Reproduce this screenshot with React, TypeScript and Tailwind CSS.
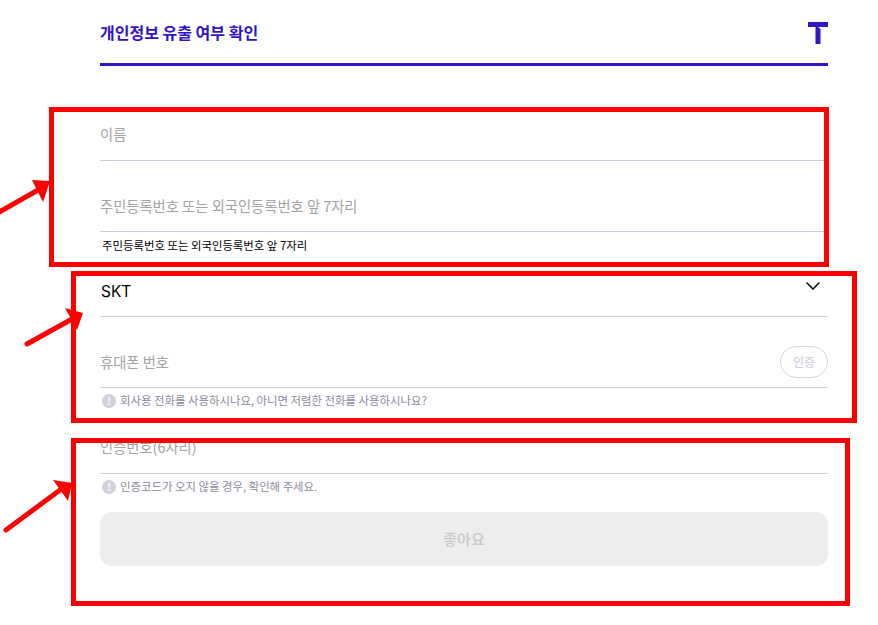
import { ChevronDown } from "lucide-react"

const font = { fontFamily: '"Noto Sans CJK KR", "Noto Sans", sans-serif' }

function Logo() {
  return (
    <svg viewBox="0 0 20 22" className="h-[22px] w-5 text-[#3413c4]">
      <rect fill="currentColor" x="0" y="0" width="20" height="5" />
      <polygon fill="currentColor" points="7.5,5 10,5 12.5,7 12.5,22 7.5,22" />
    </svg>
  )
}

function Notice({ children }: { children: React.ReactNode }) {
  return (
    <div className="flex h-[26px] items-center gap-1 pl-0.5 text-[11.4px] text-[#8b8b9b]">
      <span className="flex h-[14px] w-[14px] items-center justify-center rounded-full bg-[#cfd1dc] text-[10px] font-bold leading-none text-white">!</span>
      <span>{children}</span>
    </div>
  )
}

function Field({ label, className, children }: { label: string; className: string; children?: React.ReactNode }) {
  return (
    <div className={`flex items-center justify-between border-b border-[#cdcddc] text-[14.3px] text-[#a3a3a3] ${className}`}>
      <span>{label}</span>
      {children}
    </div>
  )
}

function Arrow({ x1, y1, x2, y2, head }: { x1: number; y1: number; x2: number; y2: number; head: string }) {
  return (
    <>
      <line x1={x1} y1={y1} x2={x2} y2={y2} stroke="#ff0000" strokeWidth="5" strokeLinecap="round" />
      <polygon points={head} fill="#ff0000" />
    </>
  )
}

export default function App() {
  return (
    <div className="relative h-[625px] w-[878px] overflow-hidden bg-white" style={font}>
      <div className="ml-[100px] flex w-[728px] flex-col">
        <header className="flex h-[66px] items-start justify-between border-b-[3px] border-[#3413c4] pt-[21px]">
          <h1 className="text-[16px] font-bold leading-[22px] text-[#3413c4]">개인정보 유출 여부 확인</h1>
          <div className="pt-px">
            <Logo />
          </div>
        </header>

        <Field label="이름" className="mt-[47px] h-[48px] pb-1.5" />
        <Field label="주민등록번호 또는 외국인등록번호 앞 7자리" className="mt-[22px] h-[49px] pb-[2px]" />
        <div className="h-[26px] pl-0.5 text-[11.4px] leading-[26px] text-black">주민등록번호 또는 외국인등록번호 앞 7자리</div>

        <div className="mt-[10px] flex h-[49px] items-start justify-between border-b border-[#cdcddc] pl-px pr-[3px] pt-[6px] text-black">
          <span className="pt-[7px] text-[15.5px] leading-[22px]" style={{ fontFamily: "Inter, sans-serif" }}>SKT</span>
          <ChevronDown className="h-6 w-6" strokeWidth={1.5} />
        </div>
        <Field label="휴대폰 번호" className="mt-[22px] h-[49px] pb-[2px]">
          <button className="h-8 w-12 rounded-full border border-[#d5d6e0] text-xs font-medium text-[#cfd1dc]">인증</button>
        </Field>
        <Notice>회사용 전화를 사용하시나요, 아니면 저렴한 전화를 사용하시나요?</Notice>

        <Field label="인증번호(6자리)" className="mt-[22px] h-[38px] pb-[15px]" />
        <Notice>인증코드가 오지 않을 경우, 확인해 주세요.</Notice>
        <button className="mt-[12px] h-[54px] w-full rounded-xl bg-[#ededed] text-[15px] font-medium text-[#c8c8c8]">좋아요</button>
      </div>

      {/* red annotations on top of the screenshot */}
      <div className="absolute left-[49px] top-[107px] h-[160px] w-[780px] border-[5px] border-[#ff0000]" />
      <div className="absolute left-[71px] top-[271px] h-[152px] w-[786px] border-[5px] border-[#ff0000]" />
      <div className="absolute left-[71px] top-[438px] h-[168px] w-[779px] border-[5px] border-[#ff0000]" />
      <svg className="absolute left-0 top-0 h-[625px] w-[878px]" viewBox="0 0 878 625">
        <Arrow x1={-4} y1={214} x2={38} y2={190} head="50,181 32,180 43,202" />
        <Arrow x1={27} y1={344} x2={72} y2={319} head="83,313 65,308 77,330" />
        <Arrow x1={6} y1={530} x2={60} y2={490} head="72,483 53,480 68,501" />
      </svg>
    </div>
  )
}
